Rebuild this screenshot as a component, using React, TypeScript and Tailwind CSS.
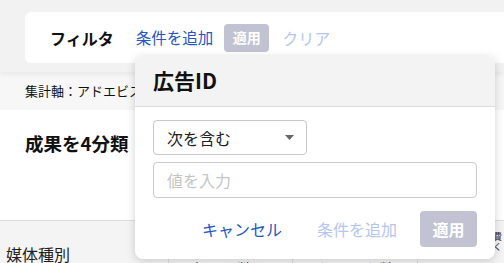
import React from "react";

const font = { fontFamily: '"Noto Sans CJK JP", "Noto Sans", sans-serif' };

const FilterBar = () => (
  <div className="relative z-10 h-[72px] bg-[#f2f2f2] pl-[25px] pt-3 shadow-[0_2px_5px_rgba(0,0,0,0.07)]">
    <div className="flex h-[51px] items-center rounded-l-md bg-white pl-[25px]">
      <span className="text-[16px] font-bold text-[#111]">フィルタ</span>
      <span className="ml-[22px] text-[15.5px] text-[#2456c4]">条件を追加</span>
      <span className="ml-[11px] flex h-[28px] w-[45px] items-center justify-center rounded bg-[#c1c3d2] text-[14px] font-bold text-white">
        適用
      </span>
      <span className="ml-[13px] text-[16px] text-[#b4c6ee]">クリア</span>
    </div>
  </div>
);

const Popup = () => (
  <div className="absolute left-[135px] top-[56px] z-20 w-[360px] overflow-hidden rounded-lg bg-white shadow-[0_2px_10px_rgba(0,0,0,0.18)]">
    <div className="flex h-[51px] items-center border-b border-[#dcdcdc] bg-[#f3f3f3] px-[18px]">
      <span className="text-[21px] font-bold text-[#111]">広告ID</span>
    </div>
    <div className="flex flex-col px-[18px] pb-[12px] pt-[13px]">
      <div className="flex h-[35px] w-[154px] items-center justify-between rounded border border-[#c8c8c8] pl-[13px] pr-[12px]">
        <span className="text-[16px] text-[#222]">次を含む</span>
        <svg width="9" height="5" viewBox="0 0 9 5">
          <path d="M0 0h9L4.5 5z" fill="#666" />
        </svg>
      </div>
      <div className="mt-[7px] flex h-[36px] w-[324px] items-center rounded border border-[#cccccc] pl-[13px]">
        <span className="text-[16px] text-[#c6c6c6]">値を入力</span>
      </div>
      <div className="mt-[13px] flex items-center justify-end">
        <span className="text-[16px] text-[#2456c4]">キャンセル</span>
        <span className="ml-[35px] text-[16px] text-[#b4c6ee]">条件を追加</span>
        <span className="ml-[23px] flex h-[36px] w-[57px] items-center justify-center rounded bg-[#c1c3d2] text-[16px] font-bold text-white">
          適用
        </span>
      </div>
    </div>
  </div>
);

export default function App() {
  return (
    <div className="relative h-[263px] w-[504px] overflow-hidden bg-white" style={font}>
      <FilterBar />
      <div className="flex h-[38px] items-center bg-[#f7f7f7] pl-[25px]">
        <span className="text-[13px] text-[#111]">集計軸：アドエビス</span>
      </div>
      <div className="h-[111px] border-b border-[#dddddd] pl-[25px] pt-[20px]">
        <span className="text-[18.5px] font-bold text-[#111]">成果を4分類</span>
      </div>
      <div className="flex h-[60px] bg-[#f4f4f4]">
        <div className="w-[168px] pl-[6px] pt-[21px]">
          <span className="text-[16px] leading-[24px] text-[#222]">媒体種別</span>
        </div>
        <div className="flex flex-1 flex-col">
          <div className="flex h-[34px] justify-end pr-[2px] pt-[11px]">
            <span className="text-[9px] leading-[10px] text-[#333]">費<br />く</span>
          </div>
          <div className="flex flex-1">
            <div className="w-[124px] border-l border-[#dddddd] pl-[20px] pt-[4px] text-[16px] text-[#222]">表示回数</div>
            <div className="w-[125px] border-l border-[#dddddd] pl-[22px] pt-[4px] text-[16px] text-[#222]">クリック数</div>
            <div className="flex-1 border-l border-[#dddddd]" />
          </div>
        </div>
      </div>
      <Popup />
    </div>
  );
}
